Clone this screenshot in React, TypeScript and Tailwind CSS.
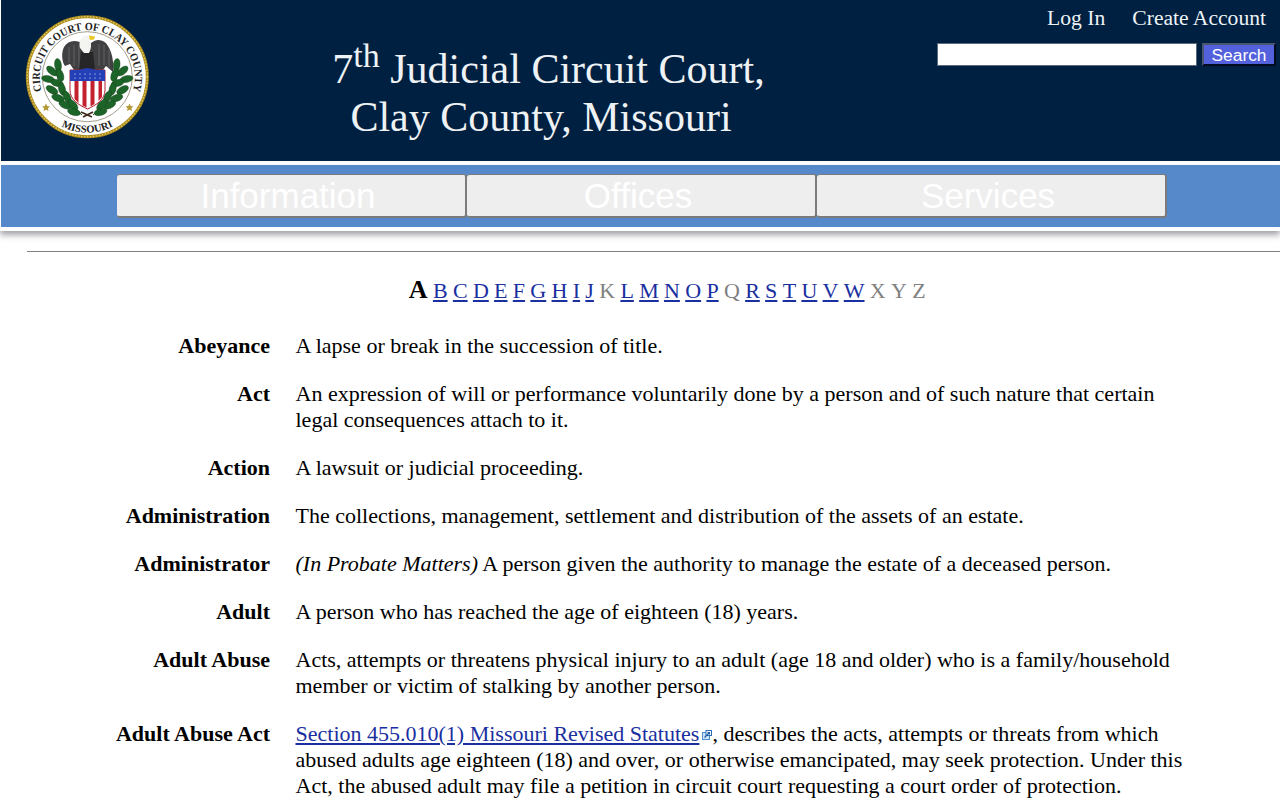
import type { ReactNode } from "react";

const letters: [string, boolean][] = [
  ["B", true], ["C", true], ["D", true], ["E", true], ["F", true], ["G", true], ["H", true], ["I", true], ["J", true],
  ["K", false], ["L", true], ["M", true], ["N", true], ["O", true], ["P", true], ["Q", false], ["R", true], ["S", true],
  ["T", true], ["U", true], ["V", true], ["W", true], ["X", false], ["Y", false], ["Z", false],
];

const ExternalIcon = () => (
  <svg viewBox="0 0 10 10" className="inline-block w-[10px] h-[10px] ml-[3px] align-[1px]">
    <rect x="0.5" y="2.5" width="7" height="7" fill="#cfe3f7" stroke="#4a8fd0" />
    <rect x="4" y="0.5" width="5.5" height="5" fill="#fff" stroke="#2a6fb8" />
    <path d="M2.5 7.5 L7 3 M5.5 2.5 H7.5 V4.5" stroke="#1d5fa8" strokeWidth="1.2" fill="none" />
  </svg>
);

const terms: { term: string; def: ReactNode }[] = [
  { term: "Abeyance", def: "A lapse or break in the succession of title." },
  {
    term: "Act",
    def: "An expression of will or performance voluntarily done by a person and of such nature that certain legal consequences attach to it.",
  },
  { term: "Action", def: "A lawsuit or judicial proceeding." },
  { term: "Administration", def: "The collections, management, settlement and distribution of the assets of an estate." },
  {
    term: "Administrator",
    def: (
      <>
        <em>(In Probate Matters)</em> A person given the authority to manage the estate of a deceased person.
      </>
    ),
  },
  { term: "Adult", def: "A person who has reached the age of eighteen (18) years." },
  {
    term: "Adult Abuse",
    def: "Acts, attempts or threatens physical injury to an adult (age 18 and older) who is a family/household member or victim of stalking by another person.",
  },
  {
    term: "Adult Abuse Act",
    def: (
      <>
        <a href="#" className="text-[#1a2fa0] underline">
          Section 455.010(1) Missouri Revised Statutes
        </a>
        <ExternalIcon />, describes the acts, attempts or threats from which abused adults age eighteen (18) and over, or
        otherwise emancipated, may seek protection. Under this Act, the abused adult may file a petition in circuit court
        requesting a court order of protection.
      </>
    ),
  },
];

const leaves: [number, number, number][] = [
  [58, 65, -8], [52, 71, -50], [60, 75, -20], [48, 79, -80], [57, 83, -75], [52, 90, -60], [62, 89, -15], [58, 98, -70],
  [67, 97, -25], [65, 105, -65], [73, 105, -40], [74, 112, -75],
];

const Seal = () => (
  <svg viewBox="25 14 124 125" className="w-[124px] h-[125px] shrink-0">
    <defs>
      <path id="sealTop" d="M 48 104.2 A 47.5 47.5 0 1 1 126.6 104.2" />
      <path id="sealBottom" d="M 51.3 119.6 A 56 56 0 0 0 123.3 119.6" />
    </defs>
    <circle cx="87.3" cy="76.7" r="60" fill="#fff" stroke="#a98a1c" strokeWidth="3" />
    <circle cx="87.3" cy="76.7" r="60" fill="none" stroke="#e3c95f" strokeWidth="1.4" strokeDasharray="1.5 1.5" />
    <circle cx="87.3" cy="76.7" r="45" fill="#fff" stroke="#8a8470" strokeWidth="0.8" />
    <text className="font-['Liberation_Serif',serif]" fontSize="11" fontWeight="700" fill="#222">
      <textPath href="#sealTop" startOffset="50%" textAnchor="middle" textLength="176" lengthAdjust="spacingAndGlyphs">
        CIRCUIT COURT OF CLAY COUNTY
      </textPath>
    </text>
    <path d="M46 103.5l1.2 2.6 2.8.3-2.1 1.9.6 2.8-2.5-1.4-2.5 1.4.6-2.8-2.1-1.9 2.8-.3z" fill="#b59a3a" />
    <path d="M129.5 103.5l1.2 2.6 2.8.3-2.1 1.9.6 2.8-2.5-1.4-2.5 1.4.6-2.8-2.1-1.9 2.8-.3z" fill="#b59a3a" />
    <path d="M57 62 Q54 92 82 115" stroke="#1f4d1f" strokeWidth="1" fill="none" />
    <path d="M117.6 62 Q120 92 93 115" stroke="#1f4d1f" strokeWidth="1" fill="none" />
    {leaves.map(([x, y, r], i) => (
      <g key={i}>
        <ellipse cx={x} cy={y} rx="3.4" ry="6.5" transform={`rotate(${r} ${x} ${y})`} fill="#1d6428" stroke="#123d18" strokeWidth="0.4" />
        <ellipse cx={174.6 - x} cy={y} rx="3.4" ry="6.5" transform={`rotate(${-r} ${174.6 - x} ${y})`} fill="#1d6428" stroke="#123d18" strokeWidth="0.4" />
      </g>
    ))}
    <path d="M81 112 L92 117 M93 112 L83 117" stroke="#3b2a1a" strokeWidth="1.6" />
    <text className="font-['Liberation_Serif',serif]" fontSize="10.5" fontWeight="700" fill="#222">
      <textPath href="#sealBottom" startOffset="50%" textAnchor="middle" textLength="54" lengthAdjust="spacingAndGlyphs">
        MISSOURI
      </textPath>
    </text>
    <path d="M84 44 C76 39 68 40 64 47 C61 53 62 62 65 66 L70 64 L74 70 L88 70 L88 46 Z" fill="#404042" />
    <path d="M90 44 C96 38 104 39 108 46 C112 52 114 62 113 72 L106 66 L103 70 L86 70 L86 46 Z" fill="#404042" />
    <path d="M69 47 V63 M74 45 V66 M79 46 V68 M99 44 V66 M104 45 V65 M109 50 V68" stroke="#6c6c70" strokeWidth="0.8" />
    <path d="M81 52 L93 52 L95 70 L79 70 Z" fill="#262628" />
    <path d="M80 48 C78 41 82 35 89 35 L92 36 L90 41 C92 45 91 49 89 53 L84 53 Z" fill="#f4f4f0" />
    <path d="M89 35.5 L95 36.5 L94 39.5 L90 40 Z" fill="#e8c820" />
    <path d="M70 70 H105 V90 C105 100 96 105 87.5 109 C79 105 70 100 70 90 Z" fill="#fff" stroke="#b02030" strokeWidth="1" />
    <path d="M74.5 81 V99 L78.5 103 V81 Z M82.5 81 V105.5 L86.5 107.5 V81 Z M90.5 81 V106.5 L94.5 104 V81 Z M98.5 81 V101 L102 97 V81 Z" fill="#c4202e" />
    <path d="M70 70 H78 L87.5 68 L97 70 H105 V81 H70 Z" fill="#2340b8" />
    <g fill="#fff">
      {[74, 79, 84, 89, 94, 99].map((x) => (
        <g key={x}>
          <circle cx={x + 1} cy="74" r="0.6" />
          <circle cx={x + 1} cy="78" r="0.6" />
        </g>
      ))}
    </g>
  </svg>
);

export default function App() {
  return (
    <div className="min-h-[800px] h-[800px] overflow-hidden bg-white font-['Liberation_Serif',serif] text-black">
      <header className="ml-px h-[161px] bg-[#002042] flex text-white">
        <div className="pl-[24px] pt-[14px]">
          <Seal />
        </div>
        <div className="w-[784px] pt-[39px] text-center text-[42px] leading-[48px] text-[#eef2f4]">
          <div className="pl-[15px]">
            7<sup className="top-0 text-[34px] leading-none align-[16px]">th</sup> Judicial Circuit Court,
          </div>
          <div>Clay County, Missouri</div>
        </div>
        <div className="flex-1 pt-[5px] pr-[4px] flex flex-col items-end">
          <div className="flex gap-[27px] pr-[10px] text-[21.6px] leading-[26px] text-[#eef2f4]">
            <a href="#">Log In</a>
            <a href="#">Create Account</a>
          </div>
          <div className="flex gap-[5px] mt-[12px]">
            <input className="w-[260px] h-[23px] bg-white border border-[#5b6b7d]" />
            <button className="w-[74px] h-[23px] bg-[#5361dc] border-2 border-t-[#4a5670] border-l-[#4a5670] border-r-[#000a20] border-b-[#000a20] text-[17.33px] leading-[18px] text-white font-['Liberation_Sans',sans-serif]">
              Search
            </button>
          </div>
        </div>
      </header>
      <div className="h-[4px]" />
      <div className="pb-[4px] bg-white shadow-[0_4px_6px_rgba(90,85,100,0.55)]">
        <nav className="ml-px h-[62px] bg-[#5589c9] pt-[9px] pl-[116px] flex items-start">
          {["Information", "Offices", "Services"].map((label) => (
            <button
              key={label}
              className="w-[350px] h-[44px] pr-[6px] bg-[#eeeeee] border-r-2 border-t-[1.5px] border-b-2 border-[#7b7b7b] rounded-[3px] text-white text-[35px] leading-[40px] font-['Liberation_Sans',sans-serif]"
            >
              {label}
            </button>
          ))}
        </nav>
      </div>
      <main className="pl-[27px] pt-[20px]">
        <hr className="border-0 border-t border-[#808080]" />
        <div className="mt-[24px] pl-[381.5px] pr-[354px] flex items-baseline gap-[5.3px] justify-center text-[22px] leading-[28px] text-[#808080]">
          <span className="font-bold text-black text-[26px]">A</span>
          {letters.map(([ch, linked]) =>
            linked ? (
              <a key={ch} href="#" className="text-[#1a2fa0] underline">
                {ch}
              </a>
            ) : (
              <span key={ch}>{ch}</span>
            ),
          )}
        </div>
        <dl className="mt-[28px] flex flex-col gap-[22px] text-[22px] leading-[26px]">
          {terms.map((t) => (
            <div key={t.term} className="flex">
              <dt className="w-[243px] text-right font-bold shrink-0">{t.term}</dt>
              <dd className="ml-[25.5px] w-[894px]">{t.def}</dd>
            </div>
          ))}
        </dl>
      </main>
    </div>
  );
}
